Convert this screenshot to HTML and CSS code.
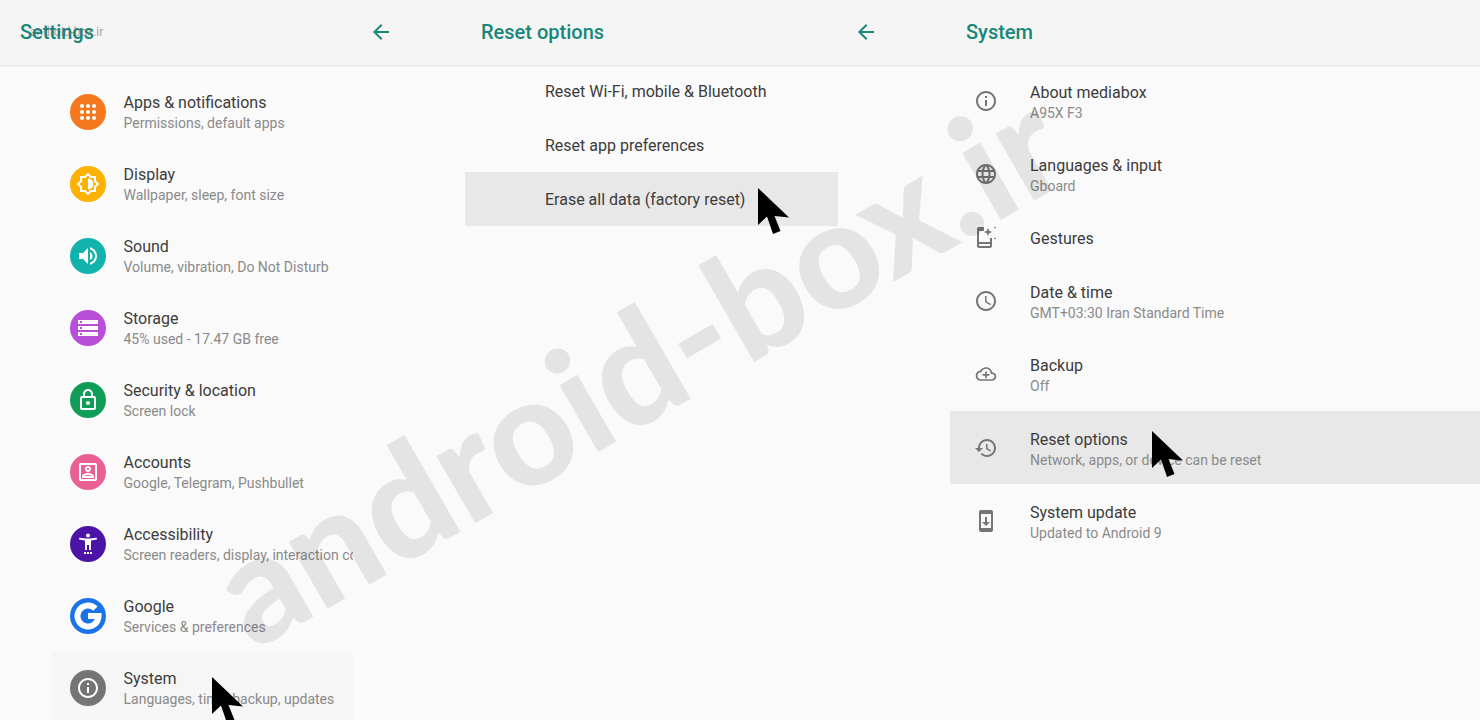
FILE: index.html
```html
<!DOCTYPE html>
<html lang="en">
<head>
    <meta charset="UTF-8">
    <meta name="viewport" content="width=device-width, initial-scale=1.0">
    <title>Settings</title>
    <link rel="stylesheet" href="styles.css">
</head>
<body>
    <svg class="sprite" aria-hidden="true">
        <symbol id="pointer" viewBox="0 0 31 47"><path d="M0 0V37L9 28.500 15 46 22.500 43 16.500 28 31 29.500Z"/></symbol>
        <symbol id="back" viewBox="0 0 24 24"><path d="M20 11H7.830l5.590-5.590L12 4l-8 8 8 8 1.410-1.410L7.830 13H20v-2z"/></symbol>
    </svg>

    <div class="screen">
        <header class="topbar">
            <div class="topbar-cell"><h2 class="first">Settings</h2><span class="mini-mark">android-box.ir</span></div>
            <div class="topbar-cell"><svg class="back"><use href="#back"/></svg><h2>Reset options</h2></div>
            <div class="topbar-cell"><svg class="back"><use href="#back"/></svg><h2>System</h2></div>
        </header>

        <main class="panels">
            <section class="panel panel-settings">
                <div class="row">
                    <span class="badge orange"><svg viewBox="0 0 24 24"><circle cx="6" cy="6" r="2"/><circle cx="12" cy="6" r="2"/><circle cx="18" cy="6" r="2"/><circle cx="6" cy="12" r="2"/><circle cx="12" cy="12" r="2"/><circle cx="18" cy="12" r="2"/><circle cx="6" cy="18" r="2"/><circle cx="12" cy="18" r="2"/><circle cx="18" cy="18" r="2"/></svg></span>
                    <div class="text"><div class="title">Apps &amp; notifications</div><div class="sub">Permissions, default apps</div></div>
                </div>
                <div class="row">
                    <span class="badge amber"><svg viewBox="0 0 24 24"><path d="M20 8.690V4h-4.690L12 .690 8.690 4H4v4.690L.690 12 4 15.310V20h4.690L12 23.310 15.310 20H20v-4.690L23.310 12 20 8.690zm-2 5.790V18h-3.520L12 20.480 9.520 18H6v-3.520L3.520 12 6 9.520V6h3.520L12 3.520 14.480 6H18v3.520L20.480 12 18 14.480zM12 6.500v11c3.030 0 5.500-2.470 5.500-5.500S15.030 6.500 12 6.500z"/></svg></span>
                    <div class="text"><div class="title">Display</div><div class="sub">Wallpaper, sleep, font size</div></div>
                </div>
                <div class="row">
                    <span class="badge teal"><svg viewBox="0 0 24 24"><path d="M3 9v6h4l5 5V4L7 9H3zm13.500 3c0-1.770-1.020-3.290-2.500-4.030v8.050c1.480-.730 2.500-2.250 2.500-4.020zM14 3.230v2.060c2.890.860 5 3.540 5 6.710s-2.110 5.850-5 6.710v2.060c4.010-.910 7-4.490 7-8.770s-2.990-7.860-7-8.770z"/></svg></span>
                    <div class="text"><div class="title">Sound</div><div class="sub">Volume, vibration, Do Not Disturb</div></div>
                </div>
                <div class="row">
                    <span class="badge purple"><svg viewBox="0 0 24 24"><path d="M2 20h20v-4H2v4zm2-3h2v2H4v-2zM2 4v4h20V4H2zm4 3H4V5h2v2zm-4 7h20v-4H2v4zm2-3h2v2H4v-2z"/></svg></span>
                    <div class="text"><div class="title">Storage</div><div class="sub">45% used - 17.47 GB free</div></div>
                </div>
                <div class="row">
                    <span class="badge green"><svg viewBox="0 0 24 24"><path d="M18 8h-1V6c0-2.760-2.240-5-5-5S7 3.240 7 6v2H6c-1.100 0-2 .900-2 2v10c0 1.100.900 2 2 2h12c1.100 0 2-.900 2-2V10c0-1.100-.900-2-2-2zM9 6c0-1.660 1.340-3 3-3s3 1.340 3 3v2H9V6zm9 14H6V10h12v10zm-6-3c1.100 0 2-.900 2-2s-.900-2-2-2-2 .900-2 2 .900 2 2 2z"/></svg></span>
                    <div class="text"><div class="title">Security &amp; location</div><div class="sub">Screen lock</div></div>
                </div>
                <div class="row">
                    <span class="badge pink"><svg viewBox="0 0 24 24"><path d="M19 5v14H5V5h14m0-2H5c-1.110 0-2 .900-2 2v14c0 1.100.890 2 2 2h14c1.100 0 2-.900 2-2V5c0-1.100-.900-2-2-2zm-7 9c-1.650 0-3-1.350-3-3s1.350-3 3-3 3 1.350 3 3-1.350 3-3 3zm0-4c-.550 0-1 .450-1 1s.450 1 1 1 1-.450 1-1-.450-1-1-1zm6 10H6v-1.530c0-2.500 3.970-3.580 6-3.580s6 1.080 6 3.580V18zm-9.690-2h7.380c-.690-.560-2.380-1.120-3.690-1.120s-3.010.560-3.690 1.120z"/></svg></span>
                    <div class="text"><div class="title">Accounts</div><div class="sub">Google, Telegram, Pushbullet</div></div>
                </div>
                <div class="row">
                    <span class="badge indigo"><svg viewBox="0 0 24 24"><path d="M20.500 5.500c-2.610.700-5.670 1-8.500 1s-5.890-.300-8.500-1L3 7.500c1.860.500 4 .830 6 1V18h2v-5h2v5h2V8.500c2-.170 4.140-.500 6-1l-.500-2zM12 5.500c1.100 0 2-.900 2-2s-.900-2-2-2-2 .900-2 2 .900 2 2 2zM8 20h2v2H8zm3 0h2v2h-2zm3 0h2v2h-2z"/></svg></span>
                    <div class="text"><div class="title">Accessibility</div><div class="sub">Screen readers, display, interaction controls</div></div>
                </div>
                <div class="row">
                    <span class="badge blue"><svg class="google" viewBox="0 0 36 36"><path d="M25.400 10.600A10.500 10.500 0 1 0 28.500 18H18"/></svg></span>
                    <div class="text"><div class="title">Google</div><div class="sub">Services &amp; preferences</div></div>
                </div>
                <div class="row is-active-soft">
                    <span class="badge gray"><svg viewBox="0 0 24 24"><path d="M11 7h2v2h-2zm0 4h2v6h-2zm1-9C6.480 2 2 6.480 2 12s4.480 10 10 10 10-4.480 10-10S17.520 2 12 2zm0 18c-4.410 0-8-3.590-8-8s3.590-8 8-8 8 3.590 8 8-3.590 8-8 8z"/></svg></span>
                    <div class="text"><div class="title">System</div><div class="sub">Languages, time, backup, updates</div></div>
                </div>
            </section>

            <section class="panel panel-reset">
                <div class="row row-single"><div class="title">Reset Wi-Fi, mobile &amp; Bluetooth</div></div>
                <div class="row row-single"><div class="title">Reset app preferences</div></div>
                <div class="row row-single is-active"><div class="title">Erase all data (factory reset)</div></div>
            </section>

            <section class="panel panel-system">
                <div class="row">
                    <svg class="glyph" viewBox="0 0 24 24"><path d="M11 7h2v2h-2zm0 4h2v6h-2zm1-9C6.480 2 2 6.480 2 12s4.480 10 10 10 10-4.480 10-10S17.520 2 12 2zm0 18c-4.410 0-8-3.590-8-8s3.590-8 8-8 8 3.590 8 8-3.590 8-8 8z"/></svg>
                    <div class="text"><div class="title">About mediabox</div><div class="sub">A95X F3</div></div>
                </div>
                <div class="row">
                    <svg class="glyph" viewBox="0 0 24 24"><path d="M11.990 2C6.470 2 2 6.480 2 12s4.470 10 9.990 10C17.520 22 22 17.520 22 12S17.520 2 11.990 2zm6.930 6h-2.950c-.320-1.250-.780-2.450-1.380-3.560 1.840.630 3.370 1.910 4.330 3.560zM12 4.040c.830 1.200 1.480 2.530 1.910 3.960h-3.820c.430-1.430 1.080-2.760 1.910-3.960zM4.260 14C4.100 13.360 4 12.690 4 12s.100-1.360.260-2h3.380c-.080.660-.140 1.320-.140 2 0 .680.060 1.340.140 2H4.260zm.820 2h2.950c.320 1.250.780 2.450 1.380 3.560-1.840-.630-3.370-1.900-4.330-3.560zm2.950-8H5.080c.960-1.660 2.490-2.930 4.330-3.560C8.810 5.550 8.350 6.750 8.030 8zM12 19.960c-.830-1.200-1.480-2.530-1.910-3.960h3.820c-.430 1.430-1.080 2.760-1.910 3.960zM14.340 14H9.660c-.090-.660-.160-1.320-.160-2 0-.680.070-1.350.160-2h4.680c.090.650.160 1.320.160 2 0 .680-.070 1.340-.160 2zm.250 5.560c.600-1.110 1.060-2.310 1.380-3.560h2.950c-.960 1.650-2.490 2.930-4.330 3.560zM16.360 14c.080-.660.140-1.320.140-2 0-.680-.060-1.340-.140-2h3.380c.160.640.260 1.310.260 2s-.100 1.360-.260 2h-3.380z"/></svg>
                    <div class="text"><div class="title">Languages &amp; input</div><div class="sub">Gboard</div></div>
                </div>
                <div class="row row-single">
                    <svg class="glyph" viewBox="0 0 24 24"><path d="M11 1H5C3.900 1 3 1.900 3 3v17c0 1.100.900 2 2 2h11c1.100 0 2-.900 2-2v-8h-2v4H5V5h5V1zM5 18h11v2H5v-2zM14 2l1.200 2.800L18 6l-2.800 1.200L14 10l-1.200-2.800L10 6l2.800-1.200zM21 .500l1 1-1 1-1-1zM21 11.500l1 1-1 1-1-1z"/></svg>
                    <div class="title">Gestures</div>
                </div>
                <div class="row">
                    <svg class="glyph" viewBox="0 0 24 24"><path d="M11.990 2C6.470 2 2 6.480 2 12s4.470 10 9.990 10C17.520 22 22 17.520 22 12S17.520 2 11.990 2zM12 20c-4.420 0-8-3.580-8-8s3.580-8 8-8 8 3.580 8 8-3.580 8-8 8zm.500-13H11v6l5.250 3.150.750-1.230-4.500-2.670z"/></svg>
                    <div class="text"><div class="title">Date &amp; time</div><div class="sub">GMT+03:30 Iran Standard Time</div></div>
                </div>
                <div class="row">
                    <svg class="glyph" viewBox="-2 -2 28 28"><path d="M19.350 10.040C18.670 6.590 15.640 4 12 4 9.110 4 6.600 5.640 5.350 8.040 2.340 8.360 0 10.910 0 14c0 3.310 2.690 6 6 6h13c2.760 0 5-2.240 5-5 0-2.640-2.050-4.780-4.650-4.960zM19 18H6c-2.210 0-4-1.790-4-4s1.790-4 4-4h.710C7.370 7.690 9.480 6 12 6c3.040 0 5.500 2.460 5.500 5.500v.5H19c1.660 0 3 1.340 3 3s-1.340 3-3 3zM11 9h2v3h3v2h-3v3h-2v-3H8v-2h3z"/></svg>
                    <div class="text"><div class="title">Backup</div><div class="sub">Off</div></div>
                </div>
                <div class="row is-active">
                    <svg class="glyph" viewBox="0 0 24 24"><path d="M13 3c-4.970 0-9 4.030-9 9H1l3.890 3.890.070.140L9 12H6c0-3.870 3.130-7 7-7s7 3.130 7 7-3.130 7-7 7c-1.930 0-3.680-.790-4.940-2.060l-1.420 1.420C8.270 19.990 10.510 21 13 21c4.970 0 9-4.030 9-9s-4.030-9-9-9zm-1 5v5l4.280 2.540.720-1.210-3.500-2.080V8H12z"/></svg>
                    <div class="text"><div class="title">Reset options</div><div class="sub">Network, apps, or device can be reset</div></div>
                </div>
                <div class="row">
                    <svg class="glyph" viewBox="0 0 24 24"><path d="M17 1.010L7 1c-1.100 0-2 .900-2 2v18c0 1.100.900 2 2 2h10c1.100 0 2-.900 2-2V3c0-1.100-.900-1.990-2-1.990zM17 19H7V5h10v14zm-1-6h-3V8h-2v5H8l4 4 4-4z"/></svg>
                    <div class="text"><div class="title">System update</div><div class="sub">Updated to Android 9</div></div>
                </div>
            </section>
        </main>

        <div class="watermark">android-box.ir</div>
        <svg class="cursor cursor-system"><use href="#pointer"/></svg>
        <svg class="cursor cursor-erase"><use href="#pointer"/></svg>
        <svg class="cursor cursor-reset"><use href="#pointer"/></svg>
    </div>
</body>
</html>
```

FILE: styles.css
```css
body {
    margin: 0;
    font-family: Roboto, "Liberation Sans", sans-serif;
    background-color: #fafafa;
    color: #3c3c3c;
}
.sprite {
    display: none;
}
.screen {
    position: relative;
    width: 1480px;
    height: 720px;
    overflow: hidden;
    background-color: #fafafa;
}
.topbar {
    position: relative;
    z-index: 1;
    display: grid;
    grid-template-columns: 365px 485px 630px;
    height: 65px;
    background-color: #f5f5f5;
    box-shadow: 0 1px 2px rgba(0, 0, 0, 0.1);
}
.topbar-cell {
    position: relative;
    display: flex;
    align-items: center;
    padding-left: 7px;
    padding-bottom: 2px;
}
.topbar h2 {
    margin: 0 0 0 88px;
    font-size: 20px;
    font-weight: 500;
    color: #17877a;
}
.topbar h2.first {
    margin-left: 13px;
}
.back {
    width: 24px;
    height: 24px;
    margin-left: -3px;
    fill: #17877a;
    flex: none;
}
.mini-mark {
    position: absolute;
    left: 30px;
    top: 25px;
    font-size: 12px;
    color: rgba(90, 90, 90, 0.55);
}
.panels {
    display: grid;
    grid-template-columns: 365px 485px 630px;
    margin-top: -1px;
}
.panel-settings {
    padding: 12px 12px 0 52px;
}
.panel-reset {
    padding-left: 100px;
    padding-right: 12px;
}
.panel-system {
    padding-left: 100px;
}
.row {
    display: flex;
    align-items: center;
    overflow: hidden;
    white-space: nowrap;
}
.panel-settings .row {
    height: 72px;
    padding-left: 17.500px;
}
.panel-reset .row {
    height: 54px;
    padding-left: 80px;
}
.panel-system .row {
    height: 73.250px;
    padding-left: 24px;
}
.panel-system .row-single {
    height: 54px;
}
.panel-system .text {
    padding-top: 3px;
}
.panel-system .row-single .title {
    padding-top: 2px;
}
.is-active {
    background-color: #e8e8e8;
}
.is-active-soft {
    background-color: #f6f6f6;
}
.title {
    font-size: 16px;
    line-height: 21px;
    color: #3c3c3c;
}
.sub {
    font-size: 14px;
    line-height: 20px;
    color: #8a8a8a;
}
.badge {
    display: flex;
    align-items: center;
    justify-content: center;
    flex: none;
    width: 36px;
    height: 36px;
    margin-right: 18px;
    border-radius: 50%;
}
.badge svg {
    width: 24px;
    height: 24px;
    fill: #fff;
}
.badge svg.google {
    width: 36px;
    height: 36px;
    fill: none;
    stroke: #fff;
    stroke-width: 6px;
}
.orange { background-color: #f5791f; }
.amber { background-color: #fdb100; }
.teal { background-color: #12b3ad; }
.purple { background-color: #b94fd8; }
.green { background-color: #0f9d58; }
.pink { background-color: #ea5f94; }
.indigo { background-color: #4b14a6; }
.blue { background-color: #1a73e8; }
.gray { background-color: #757575; }
.glyph {
    flex: none;
    width: 24px;
    height: 24px;
    margin-right: 32px;
    fill: #757575;
}
.watermark {
    position: absolute;
    left: 262px;
    top: 516px;
    font-family: Lato, sans-serif;
    font-size: 150px;
    font-weight: 900;
    line-height: 1;
    white-space: nowrap;
    color: rgba(0, 0, 0, 0.085);
    transform: rotate(-30deg);
    transform-origin: 0 100%;
    pointer-events: none;
}
.cursor {
    position: absolute;
    width: 31px;
    height: 47px;
    fill: #000;
}
.cursor-system { left: 212px; top: 677px; }
.cursor-erase { left: 758px; top: 188px; }
.cursor-reset { left: 1152px; top: 431px; }
```
